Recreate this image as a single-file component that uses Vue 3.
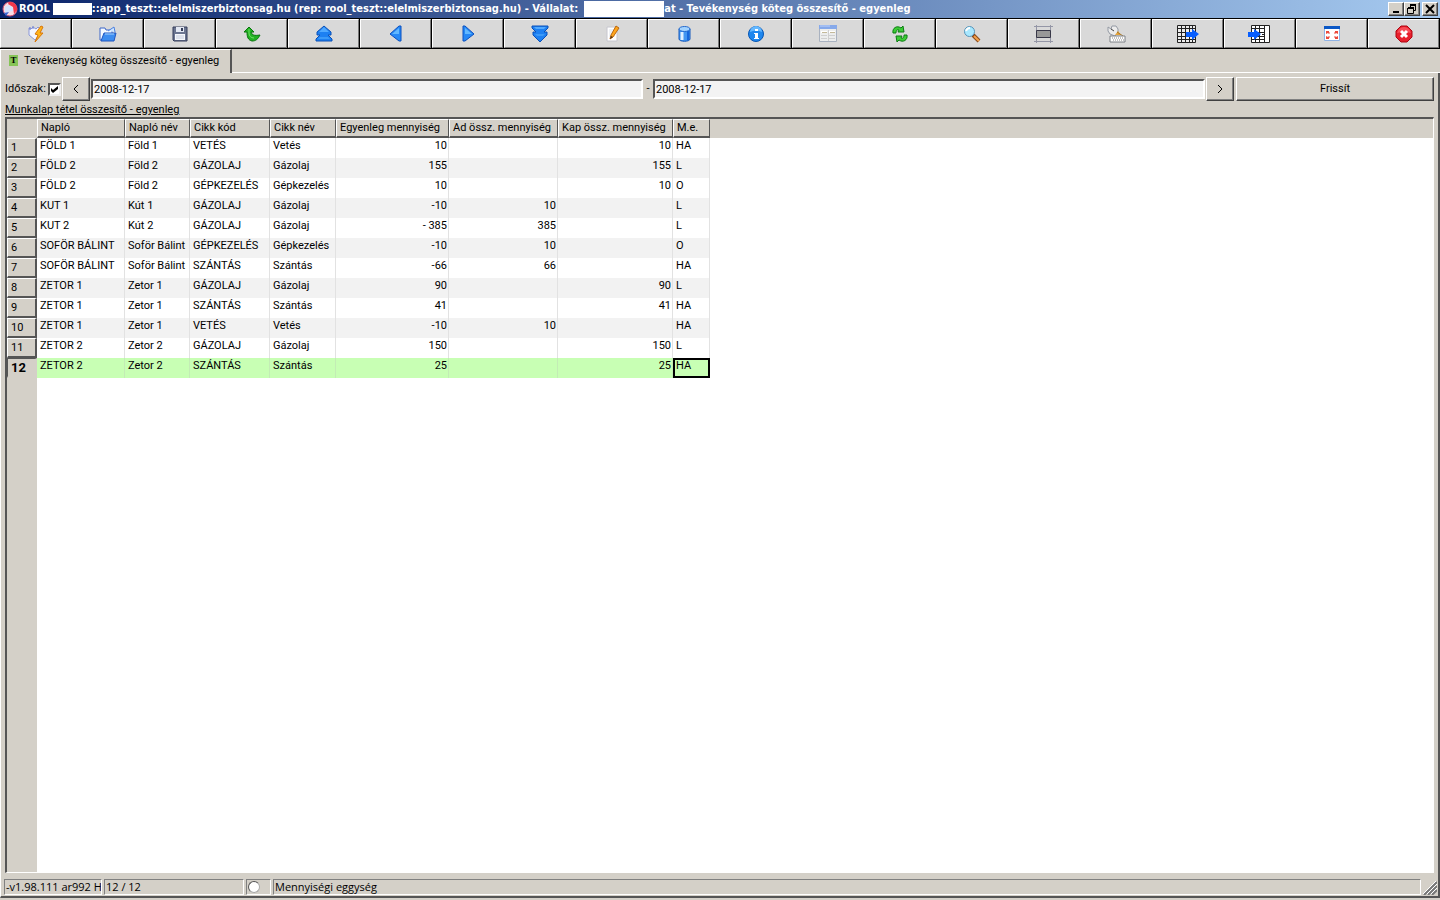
<script setup>
const columns = [
  { key: 'naplo', label: 'Napló', cls: 'w-naplo' },
  { key: 'naploNev', label: 'Napló név', cls: 'w-nev' },
  { key: 'kod', label: 'Cikk kód', cls: 'w-kod' },
  { key: 'cikkNev', label: 'Cikk név', cls: 'w-cikk' },
  { key: 'egyenleg', label: 'Egyenleg mennyiség', cls: 'w-egy', num: true },
  { key: 'ad', label: 'Ad össz. mennyiség', cls: 'w-ad', num: true },
  { key: 'kap', label: 'Kap össz. mennyiség', cls: 'w-kap', num: true },
  { key: 'me', label: 'M.e.', cls: 'w-me' },
]
const rows = [
  ['FÖLD 1', 'Föld 1', 'VETÉS', 'Vetés', '10', '', '10', 'HA'],
  ['FÖLD 2', 'Föld 2', 'GÁZOLAJ', 'Gázolaj', '155', '', '155', 'L'],
  ['FÖLD 2', 'Föld 2', 'GÉPKEZELÉS', 'Gépkezelés', '10', '', '10', 'O'],
  ['KUT 1', 'Kút 1', 'GÁZOLAJ', 'Gázolaj', '-10', '10', '', 'L'],
  ['KUT 2', 'Kút 2', 'GÁZOLAJ', 'Gázolaj', '- 385', '385', '', 'L'],
  ['SOFÖR BÁLINT', 'Soför Bálint', 'GÉPKEZELÉS', 'Gépkezelés', '-10', '10', '', 'O'],
  ['SOFÖR BÁLINT', 'Soför Bálint', 'SZÁNTÁS', 'Szántás', '-66', '66', '', 'HA'],
  ['ZETOR 1', 'Zetor 1', 'GÁZOLAJ', 'Gázolaj', '90', '', '90', 'L'],
  ['ZETOR 1', 'Zetor 1', 'SZÁNTÁS', 'Szántás', '41', '', '41', 'HA'],
  ['ZETOR 1', 'Zetor 1', 'VETÉS', 'Vetés', '-10', '10', '', 'HA'],
  ['ZETOR 2', 'Zetor 2', 'GÁZOLAJ', 'Gázolaj', '150', '', '150', 'L'],
  ['ZETOR 2', 'Zetor 2', 'SZÁNTÁS', 'Szántás', '25', '', '25', 'HA'],
]
const tools = [
  { name: 'connect', svg: '<path d="M2 3l2 1 2-2 3 2 2-2 2 2v5l-5 6-6-5z" fill="#f4f6ff" stroke="#8a97d8"/><path d="M3 2v3M6 1v3" stroke="#6e7ed0"/><path d="M14 1l-6 8 3 1-3 7 8-9h-3l3-6z" fill="#ffb41c" stroke="#d8760a"/>' },
  { name: 'open', svg: '<path d="M1 3h5l1 2h6v10H1z" fill="#f4f9ff" stroke="#3c66c8"/><path d="M9 6l6-4 1 5" fill="#cfe7ff" stroke="#4a7fe0"/><path d="M2 16l3-8h12l-2 8z" fill="#3d8df0" stroke="#1f55c0"/><path d="M6 9h9" stroke="#a8d4ff"/>' },
  { name: 'save', svg: '<path d="M2 2h14v14H3l-1-1z" fill="#6b7590" stroke="#343c5a"/><path d="M5 2h8v5H5z" fill="#e3e8f3"/><path d="M10 3h2v3h-2z" fill="#333c58"/><path d="M4 9h10v6H4z" fill="#f5f7fb"/><path d="M5 11h8M5 13h8" stroke="#c4cbdc"/>' },
  { name: 'undo', svg: '<path d="M1 7l5-5 5 5H8c1 3 3 4 9 3-2 4-4 6-8 6-4-1-5-4-5-9z" fill="#22b222" stroke="#08750d" stroke-linejoin="round"/><path d="M6 4v4c0 3 2 5 5 5" fill="none" stroke="#6fe066"/>' },
  { name: 'first', svg: '<path d="M9 1l7 6v3h-3l4 4v2H1v-2l4-4H2V7z" fill="#1d80f2" stroke="#0b50b8" stroke-linejoin="round"/><path d="M9 2l5 5H4z" fill="#50a9ff"/><path d="M5 12h8l2 2H3z" fill="#3c9af8"/>' },
  { name: 'previous', svg: '<path d="M14 1v15h-2L3 9 12 1z" fill="#2688f5" stroke="#0b50c0" stroke-linejoin="round"/><path d="M12 3v6H5z" fill="#62b8ff"/>' },
  { name: 'next', svg: '<path d="M4 1v15h2l9-7-9-8z" fill="#2688f5" stroke="#0b50c0" stroke-linejoin="round"/><path d="M6 3v6h7z" fill="#62b8ff"/>' },
  { name: 'last', svg: '<path d="M1 1h16v2l-4 4h3v3l-7 7-7-7V7h3L1 3z" fill="#1d80f2" stroke="#0b50b8" stroke-linejoin="round"/><path d="M3 2h12l-2 2H5z" fill="#50a9ff"/><path d="M4 9h10l-2 2H6z" fill="#3c9af8"/>' },
  { name: 'edit', svg: '<path d="M4 2h10v14H4z" fill="#fff" stroke="#c6c6ce"/><path d="M6 5h6M6 7h6M6 9h6M6 11h6" stroke="#dde3ed"/><path d="M13 1l3 2-6 9-3 2 1-4z" fill="#ffa51c" stroke="#b96810"/><path d="M7 14l1-3 2 1z" fill="#4e321a"/>' },
  { name: 'database', svg: '<path d="M4 4v10c0 3 11 3 11 0V4z" fill="#4296f2" stroke="#1458bc"/><path d="M7 7v8" stroke="#dff0ff" stroke-width="3"/><path d="M13 6v9" stroke="#1768dd" stroke-width="2"/><ellipse cx="9.5" cy="4" rx="5.5" ry="2.5" fill="#a2d3ff" stroke="#2469cd"/>' },
  { name: 'info', svg: '<circle cx="9" cy="9" r="7.5" fill="#1f87ee" stroke="#0756b4"/><path d="M3 7a6 6 0 0 1 12 0q-6-3-12 0" fill="#64b8ff"/><path d="M8 4h3v2H8zM7 8h4v5h1v1H7v-1h1V9H7z" fill="#fff"/>' },
  { name: 'form', svg: '<path d="M.5 .5h17v16H.5z" fill="#eceded" stroke="#a9b2c0"/><path d="M0 0h18v4H0z" fill="#86a9ea"/><path d="M1 1h10" stroke="#bfd3fa"/><path d="M2 6h6v2H2zM10 6h6v2h-6z" fill="#fff"/><path d="M2 10.500h6M2 13.500h6M10 10.500h6M10 13.500h6M9.5 5v11" stroke="#cfcfcf"/><path d="M3 7.500h5M11 7.500h5" stroke="#c4b999"/>' },
  { name: 'reload', svg: '<path d="M2 8C1 3 6 0 10 3l2-2 1 6H7l1-2C6 4 5 6 5 8z" fill="#3ccc35" stroke="#0b7b13" stroke-linejoin="round"/><path d="M16 10c1 5-4 8-8 5l-2 2-1-6h6l-1 2c2 1 3-1 3-3z" fill="#3ccc35" stroke="#0b7b13" stroke-linejoin="round"/>' },
  { name: 'search', svg: '<path d="M10 10l6 6" stroke="#8a4a1c" stroke-width="4"/><path d="M11 11l5 5" stroke="#f4a24b" stroke-width="2"/><circle cx="6.500" cy="6.500" r="5" fill="#a8e8ff" stroke="#5794b9"/><path d="M3 6q1-3 4-3" stroke="#fff" stroke-width="2" fill="none"/>' },
  { name: 'rows', svg: '<path d="M-1 1.500h19M-1 16.500h19M1.500 0v18M15.500 0v18" stroke="#9496a6"/><path d="M1.500 5.500h14v7h-14z" fill="#999" stroke="#383848"/>' },
  { name: 'config', svg: '<path d="M1 2l3 2 1-3h4l2 3v4l-3 3-5-2-2-3z" fill="#ececec" stroke="#949aa4"/><path d="M4 4l3 2" stroke="#444"/><path d="M8 10l3-4 3 4z" fill="#e5a43b"/><path d="M10 7l6 4" stroke="#a87829"/><path d="M3 11h15v6H3z" fill="#fff" stroke="#7c8086"/><path d="M5 13h12M6 15h11" stroke="#888" stroke-dasharray="1 1"/>' },
  { name: 'export', svg: '<path d="M-1.500 .500h18v17h-18zM-1.500 3.500h18M-1.500 7.500h18M-1.500 11.500h18M-1.500 14.500h18M2.500 .500v17M6.500 .500v17M10.500 .500v17M13.500 .500v17" fill="#ececec" stroke="#222"/><path d="M7 7h6V4l7 5-7 6v-3H7z" fill="#075eff"/>' },
  { name: 'import', svg: '<path d="M.500 .500h18v17H.500zM.500 3.500h13M.500 7.500h13M.500 11.500h13M.500 14.500h13M4.500 .500v17M8.500 .500v17M13.500 .500v17" fill="#fff" stroke="#222"/><path d="M-3 7h6V4l7 5-7 6v-3h-6z" fill="#075eff"/><path d="M11 9.500h3" stroke="#222"/>' },
  { name: 'fullscreen', svg: '<path d="M1.500 1.500h15v14h-15z" fill="#fff" stroke="#8fb2e4"/><path d="M1 1h16v3H1z" fill="#0b58c6"/><path d="M3 6h3v1l1 1-1 1-1-1-2 1zM15 6h-3v1l-1 1 1 1 1-1 2 1zM3 14v-3l2 1 1-1 1 1-1 1v1zM15 14v-3l-2 1-1-1-1 1 1 1v1z" fill="#ec4a3c"/>' },
  { name: 'exit', svg: '<path d="M6 1h6l5 5v6l-5 5H6l-5-5V6z" fill="#e8202d" stroke="#ae0613"/><path d="M4 4q5-4 10 0l2 4q-7-2-14 0z" fill="#f8505a"/><path d="M6 6l6 6M12 6l-6 6" stroke="#fff" stroke-width="3"/>' },
]
</script>

<template>
  <main class="window">
    <header class="titlebar">
      <svg class="logo" viewBox="0 0 16 16"><circle cx="8" cy="8" r="7" fill="#f9dce4" stroke="#d45070"/><path d="M7 1a7 7 0 0 1 8 8l-3 4-1-7-5-3z" fill="#f0384a"/><path d="M3 12V6l4-2 4 3v3l-5 1z" fill="#d4e4ff"/><path d="M2 12l5-1-3 4z" fill="#3b66d1"/></svg>
      <h1>
        <span>ROOL</span><span class="mask mask-user"></span><span>::app_teszt::elelmiszerbiztonsag.hu (rep: rool_teszt::elelmiszerbiztonsag.hu) - Vállalat:</span><span class="mask mask-company"></span><span>at - Tevékenység köteg összesítő - egyenleg</span>
      </h1>
      <div class="controls">
        <button aria-label="Minimize"><svg viewBox="0 0 12 10"><path d="M3 8h6" stroke="#000" stroke-width="2"/></svg></button>
        <button aria-label="Restore"><svg viewBox="0 0 12 10"><path d="M4 1h6M2 4h6" stroke="#000" stroke-width="2"/><path d="M4.500 1v3M9.500 1v5.500H8M1.500 4v5.500h6V4" fill="none" stroke="#000"/></svg></button>
        <button class="close" aria-label="Close"><svg viewBox="0 0 12 10"><path d="M2 1l8 8M10 1L2 9" stroke="#000" stroke-width="2"/></svg></button>
      </div>
    </header>
    <nav class="toolbar">
      <button v-for="t in tools" :key="t.name" :aria-label="t.name"><svg viewBox="0 0 18 18" v-html="t.svg"></svg></button>
    </nav>
    <div class="tabs">
      <button class="tab"><span class="tab-icon">T</span>Tevékenység köteg összesítő - egyenleg</button>
      <div class="tab-rest"></div>
    </div>
    <section class="panel">
      <form class="filter" @submit.prevent>
        <label for="period">Időszak:</label>
        <span class="check"><input id="period" type="checkbox" checked /><svg viewBox="0 0 9 9"><path d="M1 3l2 2 5-4v3L3 8 1 6z"/></svg></span>
        <button class="step" type="button" aria-label="Előző"><svg viewBox="0 0 6 8"><path d="M5 0L1 4l4 4" fill="none" stroke="#000"/></svg></button>
        <input class="date" type="text" value="2008-12-17" aria-label="Kezdő dátum" />
        <span class="dash">-</span>
        <input class="date" type="text" value="2008-12-17" aria-label="Záró dátum" />
        <button class="step" type="button" aria-label="Következő"><svg viewBox="0 0 6 8"><path d="M1 0l4 4-4 4" fill="none" stroke="#000"/></svg></button>
        <button class="refresh" type="button">Frissít</button>
      </form>
      <h2>Munkalap tétel összesítő - egyenleg</h2>
      <div class="grid">
        <table>
          <thead><tr><th class="corner"></th><th v-for="c in columns" :key="c.key" :class="c.cls">{{ c.label }}</th></tr></thead>
          <tbody>
            <tr v-for="(r, i) in rows" :key="i" :class="{ selected: i === 11 }">
              <th>{{ i + 1 }}</th>
              <td v-for="(v, j) in r" :key="j" :class="{ num: columns[j].num, focus: i === 11 && j === 7 }">{{ v }}</td>
            </tr>
          </tbody>
        </table>
      </div>
      <footer class="status">
        <span class="version">-v1.98.111 ar992 H</span>
        <span class="position">12 / 12</span>
        <span class="lamp"><i></i></span>
        <span class="hint">Mennyiségi eggység</span>
        <svg class="grip" viewBox="0 0 14 14"><path d="M1 14L14 1M5 14l9-9M9 14l5-5" stroke="#777" stroke-width="2"/><path d="M0 13L13 0M4 13l10-10M8 13l6-6" stroke="#fff"/></svg>
      </footer>
    </section>
  </main>
</template>

<style>
body { background: #fff; }
</style>
<style scoped>
* { box-sizing: border-box; }
.window { height: 100vh; display: flex; flex-direction: column; padding-bottom: 2px; background: #d4d0c8; color: #000; font: 11px/14px Roboto, "Liberation Sans", sans-serif; }
button, input { font: inherit; color: inherit; margin: 0; border-radius: 0; }
.titlebar { height: 18px; flex: none; display: flex; align-items: center; padding: 0 2px; background: linear-gradient(90deg, #0a246a, #a6caf0); color: #fff; }
.logo { width: 16px; height: 16px; flex: none; }
h1 { flex: 1; display: flex; align-items: center; margin: 0 0 0 1px; font: bold 11px/16px "DejaVu Sans Condensed", "DejaVu Sans", sans-serif; white-space: nowrap; }
.mask { height: 12px; background: #fff; }
.mask-user { width: 39px; margin-left: 3px; }
.mask-company { width: 80px; height: 16px; margin-left: 6px; }
.controls { display: flex; }
.controls button { width: 16px; height: 14px; padding: 1px; display: flex; background: #d4d0c8; border: 1px solid; border-color: #fff #404040 #404040 #fff; box-shadow: inset -1px -1px #808080; }
.controls .close { margin-left: 2px; }
.controls svg { width: 12px; height: 10px; }
.toolbar { display: flex; flex: none; height: 31px; padding-top: 1px; background: #000; }
.toolbar button { flex: 1; min-width: 0; display: flex; align-items: center; justify-content: center; padding: 0; margin: 0 1px 1px 0; background: #d9d9d9; border: 1px solid; border-color: #fff #777 #777 #fff; }
.toolbar svg { width: 18px; height: 18px; overflow: visible; }
.tabs { display: flex; flex: none; height: 24px; }
.tab { flex: none; width: 232px; padding: 0 0 2px 8px; display: flex; align-items: center; background: #d4d0c8; border: solid #fff; border-width: 1px 0 0 1px; border-right: 2px solid #555; white-space: nowrap; }
.tab-icon { width: 9px; height: 11px; margin-right: 6px; background: #86c457; font: bold 9px/11px "Liberation Serif", serif; text-align: center; }
.tab-rest { flex: 1; border-bottom: 1px solid #fff; }
.panel { flex: 1; min-height: 0; display: flex; flex-direction: column; padding: 3px 4px 1px 4px; border: solid; border-width: 0 2px 2px 1px; border-color: #fff #555 #555 #fff; }
.filter { display: flex; align-items: center; height: 26px; flex: none; }
.filter label { width: 43px; white-space: nowrap; }
.check { display: grid; width: 13px; height: 13px; }
.check input, .check svg { grid-area: 1 / 1; }
.check input { appearance: none; width: 13px; height: 13px; background: #fff; border: 2px solid; border-color: #555 #eee #eee #555; }
.check svg { width: 9px; height: 9px; place-self: center; pointer-events: none; }
.step, .refresh { height: 24px; padding: 0; background: #d4d0c8; border: 1px solid; border-color: #fff #404040 #404040 #fff; box-shadow: inset -1px -1px #808080; }
.step { width: 28px; flex: none; margin: 0 1px; display: flex; align-items: center; justify-content: center; }
.step svg { width: 6px; height: 8px; }
.date { flex: 1; min-width: 0; height: 20px; padding: 0 1px; background: #f3f3f3; border: 2px solid; border-color: #555 #fff #fff #555; outline: none; }
.dash { width: 10px; text-align: center; }
.refresh { width: 198px; flex: none; margin-left: 1px; }
h2 { margin: 1px 0 0; flex: none; height: 14px; font-size: 11px; font-weight: normal; line-height: 14px; text-decoration: underline; }
.grid { flex: 1; min-height: 0; overflow: hidden; border: solid; border-width: 2px 1px 1px 2px; border-color: #555 #fff #fff #555; background: linear-gradient(#d4d0c8, #d4d0c8) 0 0 / 100% 19px no-repeat, linear-gradient(90deg, #d4d0c8 30px, #fff 30px); }
table { table-layout: fixed; width: 703px; border-collapse: separate; border-spacing: 0; }
th { font-weight: normal; text-align: left; padding: 0 3px; background: #d4d0c8; white-space: nowrap; border: solid; border-width: 1px 2px 2px 1px; border-color: #fff #555 #555 #fff; }
thead th { height: 19px; border-right-width: 1px; }
th.corner { width: 30px; border-color: #d4d0c8; }
.w-naplo { width: 88px; } .w-nev { width: 65px; } .w-kod { width: 80px; } .w-cikk { width: 66px; } .w-egy { width: 113px; } .w-ad { width: 109px; } .w-kap { width: 115px; } .w-me { width: 37px; }
tbody tr { height: 20px; }
tbody th { height: 20px; }
td { height: 20px; padding: 0 1px 5px 3px; background: #fff; border-right: 1px solid #e2e2e2; white-space: nowrap; }
td.num { text-align: right; }
tr:nth-child(even) td { background: #f2f2f2; }
tr.selected td { background: #c8ffb4; border-right-color: #c3ecb5; }
tr.selected th { font-weight: bold; font-size: 13px; border-color: #555 #d4d0c8 #d4d0c8 #555; }
tr.selected td.focus { border-right-color: #000; box-shadow: inset 2px 2px #000, inset -1px -2px #000; }
.status { flex: none; display: flex; gap: 2px; height: 16px; margin: 6px -3px 0 -1px; font: 11px/14px "Open Sans", "DejaVu Sans", sans-serif; }
.status span { height: 16px; border: 1px solid; border-color: #808080 #fff #fff #808080; padding: 0 1px; white-space: nowrap; overflow: hidden; }
.version { width: 98px; } .position { width: 140px; } .status .lamp { width: 25px; } .hint { flex: 1; }
.lamp i { display: block; width: 12px; height: 12px; margin-top: 1px; border-radius: 50%; background: #fff; border: 1px solid #aaa; border-top-color: #555; border-left-color: #555; }
.grip { width: 14px; height: 14px; align-self: flex-end; }
</style>
